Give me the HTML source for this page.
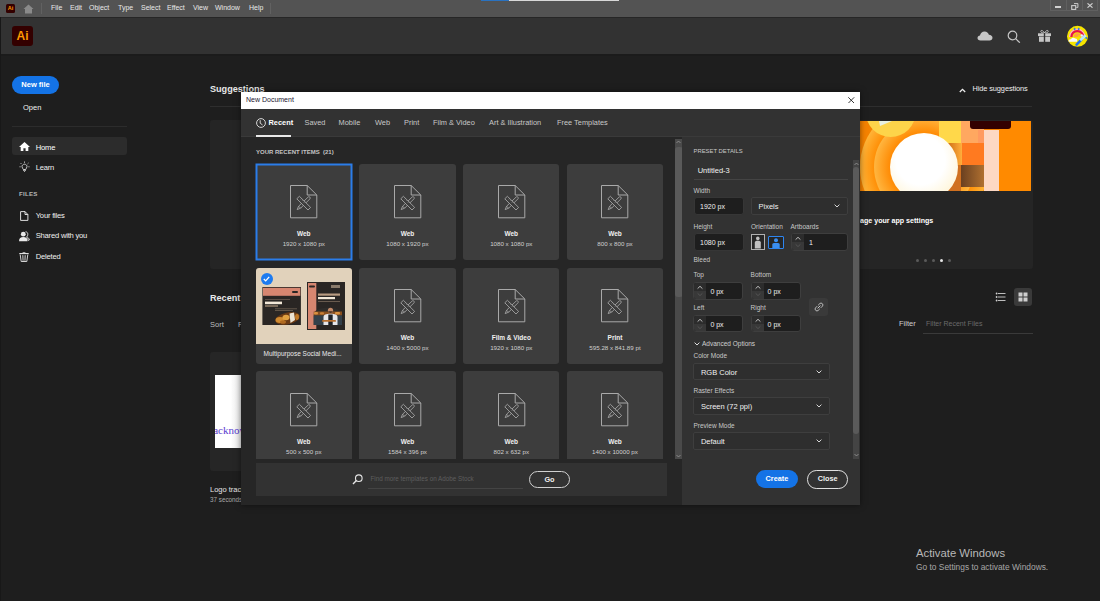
<!DOCTYPE html>
<html><head><meta charset="utf-8">
<style>
*{margin:0;padding:0;box-sizing:border-box}
html,body{width:1100px;height:601px;overflow:hidden;background:#1e1e1e;font-family:"Liberation Sans",sans-serif;color:#ddd}
.a{position:absolute;white-space:nowrap}
#menubar{position:absolute;left:0;top:0;width:1100px;height:17px;background:#535353}
#menubar .m{position:absolute;top:3.9px;font-size:7px;color:#e8e8e8}
#header{position:absolute;left:0;top:17px;width:1100px;height:37px;background:#323232}
#main{position:absolute;left:0;top:54px;width:1100px;height:547px;background:#1e1e1e}
.side{font-size:7.5px;color:#f0f0f0}
.tab{top:26.3px;font-size:7.4px;color:#c8c8c8}
.lbl{font-size:6.5px;color:#c8c8c8}
.inp{background:#1e1e1e;border-radius:3px;border:1px solid #363636}
.inp span,.step span,.dd span{position:absolute;top:50%;transform:translateY(-50%);font-size:7px;color:#f0f0f0}
.dd{border:1px solid #3e3e3e;border-radius:2px;background:#2e2e2e}
.dd span{left:6.5px;font-size:7.5px}
.dd .chev{position:absolute;right:7px;top:50%;margin-top:-2px}
.step{background:#1e1e1e;border-radius:3px;overflow:hidden;border:1px solid #3e3e3e}
.card{position:absolute;width:96.4px;height:96.7px;background:#3d3d3d;border-radius:3px}
.card .ic{position:absolute;left:34.6px;top:21.2px;width:28px;height:34px}
.card .ic svg{display:block}
.card .ct{position:absolute;left:0;width:100%;top:66.7px;text-align:center;font-size:6.5px;font-weight:bold;color:#f0f0f0}
.card .cs{position:absolute;left:0;width:100%;top:76.5px;text-align:center;font-size:6.2px;color:#d0d0d0}

</style></head><body>
<div id="menubar">
  <div class="a" style="left:6px;top:4px;width:9px;height:9px;background:#330000;border-radius:1.5px;color:#ff9a00;font-size:5.5px;font-weight:bold;line-height:9px;text-align:center">Ai</div>
  <svg class="a" style="left:23px;top:4px" width="11" height="10" viewBox="0 0 11 10"><path d="M5.5 0.5 L10.5 5 H9 V9.5 H2 V5 H0.5 Z" fill="#8a8a8a"/></svg>
  <div class="a" style="left:41px;top:3px;width:1px;height:11px;background:#616161"></div>
  <div class="m a" style="left:51px">File</div>
  <div class="m a" style="left:70px">Edit</div>
  <div class="m a" style="left:89px">Object</div>
  <div class="m a" style="left:118px">Type</div>
  <div class="m a" style="left:141px">Select</div>
  <div class="m a" style="left:167px">Effect</div>
  <div class="m a" style="left:193px">View</div>
  <div class="m a" style="left:215px">Window</div>
  <div class="m a" style="left:249px">Help</div>
  <div class="a" style="left:270px;top:3px;width:1px;height:11px;background:#616161"></div>
  <div class="a" style="left:481px;top:0;width:28px;height:1px;background:#2a72c0"></div>
  <div class="a" style="left:509px;top:0;width:110px;height:1px;background:#d8d8d8"></div>
  <!-- window controls -->
  <div class="a" style="left:1050px;top:0;width:48px;height:11px;border:1px solid #606060;border-top:none"></div>
  <div class="a" style="left:1066px;top:0;width:1px;height:10px;background:#606060"></div>
  <div class="a" style="left:1082px;top:0;width:1px;height:10px;background:#606060"></div>
  <div class="a" style="left:1055px;top:6px;width:6.2px;height:1.8px;background:#d0d0d0"></div>
  <svg class="a" style="left:1071px;top:3px" width="8" height="7" viewBox="0 0 8 7"><path d="M3 0.6 H6.9 V4.4 H5.3" fill="none" stroke="#cccccc" stroke-width="1"/><rect x="0.7" y="2.6" width="4" height="3.8" fill="none" stroke="#cccccc" stroke-width="1.1"/></svg>
  <svg class="a" style="left:1087.3px;top:3px" width="6" height="5" viewBox="0 0 6 5"><path d="M0.5 0.3L5.5 4.7M5.5 0.3L0.5 4.7" stroke="#d0d0d0" stroke-width="1.1"/></svg>
</div>
<div id="header">
  <div class="a" style="left:12px;top:9px;width:21px;height:20px;background:#330000;border-radius:3px;color:#ff9a00;font-size:12px;font-weight:bold;line-height:20px;text-align:center">Ai</div>
  <svg class="a" style="left:977px;top:13px" width="16" height="11" viewBox="0 0 16 11"><path d="M3.5 10.5 C1.5 10.5 0.5 9.3 0.5 8 C0.5 6.6 1.6 5.6 3 5.6 C3.3 3.4 5 1.5 7.6 1.5 C9.8 1.5 11.4 2.9 11.9 4.8 C14 4.8 15.5 6.2 15.5 7.7 C15.5 9.3 14.3 10.5 12.5 10.5 Z" fill="#c6c6c6"/></svg>
  <svg class="a" style="left:1006.5px;top:12.6px" width="14" height="13" viewBox="0 0 14 13"><circle cx="5.5" cy="5.5" r="4.3" fill="none" stroke="#c6c6c6" stroke-width="1.2"/><path d="M8.6 8.6 L12.8 12.6" stroke="#c6c6c6" stroke-width="1.3"/></svg>
  <svg class="a" style="left:1037px;top:12.3px" width="15" height="13" viewBox="0 0 15 13"><path d="M7.5 4 C6 1 3.5 0.8 3.8 2.6 C4 3.8 6 4 7.5 4 C9 4 11 3.8 11.2 2.6 C11.5 0.8 9 1 7.5 4" fill="none" stroke="#c6c6c6" stroke-width="0.9"/><rect x="1" y="4.3" width="13" height="2.8" fill="#c6c6c6"/><rect x="2" y="7.6" width="11" height="5.2" fill="#c6c6c6"/><rect x="6.8" y="4" width="1.4" height="9" fill="#323232"/></svg>
  <svg class="a" style="left:1066px;top:8px" width="23" height="23" viewBox="0 0 23 23"><circle cx="11.5" cy="11.3" r="10.5" fill="#f5e400"/><path d="M3.6 12 A7.6 7.6 0 0 1 18.8 12" fill="none" stroke="#ffa8d8" stroke-width="1.4"/><path d="M5.4 12 A5.9 5.9 0 0 1 17.2 12" fill="none" stroke="#e8104e" stroke-width="2.2"/><path d="M7.6 12 A3.8 3.8 0 0 1 15.2 12 Z" fill="#ffa040"/><path d="M11.4 12 L13 9.5 L15.2 12 Z" fill="#ffd000"/><path d="M2.6 16.8 C2.2 15 3.6 13.9 5 14.3 C5.6 12.6 8 12.3 9.2 13.6 C10.6 13.4 11.6 14.6 11.2 16.8 Z" fill="#fafafa"/><path d="M10.6 19.6 L15.4 14.6" stroke="#1f6ff0" stroke-width="2.6" stroke-linecap="round"/><path d="M14.2 15.2 L19.6 10.2" stroke="#b8e6ff" stroke-width="2.6"/><circle cx="15.8" cy="10.4" r="1.2" fill="#e8f6ff"/><circle cx="20.3" cy="13" r="0.9" fill="#2a7af0"/><ellipse cx="8.6" cy="3.9" rx="0.9" ry="1.2" fill="#3a7be0"/><ellipse cx="12.7" cy="3.9" rx="0.9" ry="1.2" fill="#3a7be0"/></svg>
</div>
<div id="main"></div>
<div class="a" style="left:0;top:17px;width:1100px;height:1px;background:#262626"></div>
<div class="a" style="left:0;top:54px;width:1100px;height:1.5px;background:#1b1b1b"></div>
<div class="a" style="left:0;top:17px;width:1px;height:584px;background:#181818"></div>

<!-- sidebar -->
<div class="a" style="left:12px;top:76px;width:47px;height:18px;border-radius:9px;background:#1473e6;color:#fff;font-size:7.5px;font-weight:bold;line-height:18px;text-align:center">New file</div>
<div class="a side" style="left:23px;top:103px">Open</div>
<div class="a" style="left:12px;top:126px;width:115px;height:1px;background:#2c2c2c"></div>
<div class="a" style="left:12px;top:137px;width:115px;height:18px;border-radius:3px;background:#2c2c2c"></div>
<svg class="a" style="left:19px;top:142px" width="11" height="9" viewBox="0 0 11 9"><path d="M5.5 0 L11 5 H9.3 V9 H6.6 V6.3 H4.4 V9 H1.7 V5 H0 Z" fill="#fff"/></svg>
<div class="a side" style="left:35.7px;top:143px;font-size:7.6px;letter-spacing:-0.15px;color:#fff">Home</div>
<svg class="a" style="left:19px;top:161px" width="11" height="11" viewBox="0 0 11 11"><path d="M5.5 3.2 C3.8 3.2 3 4.5 3 5.6 C3 6.8 4 7.4 4.3 8.5 H6.7 C7 7.4 8 6.8 8 5.6 C8 4.5 7.2 3.2 5.5 3.2 Z M4.4 9 H6.6 L5.5 10.6 Z" fill="none" stroke="#e6e6e6" stroke-width="0.8"/><path d="M5.5 0.5V1.8M1.5 2L2.4 2.9M9.5 2L8.6 2.9M0.5 5.8H1.6M9.4 5.8H10.5" stroke="#e6e6e6" stroke-width="0.8"/></svg>
<div class="a side" style="left:35.7px;top:163px;font-size:7.6px;letter-spacing:-0.2px">Learn</div>
<div class="a" style="left:19px;top:190px;font-size:6.2px;font-weight:bold;color:#b4b4b4;letter-spacing:0.2px">FILES</div>
<svg class="a" style="left:20.3px;top:210.6px" width="8.5" height="10" viewBox="0 0 8.5 10"><path d="M0.6 0.6 H5 L7.9 3.5 V9.4 H0.6 Z M5 0.6 V3.5 H7.9" fill="none" stroke="#e8e8e8" stroke-width="0.95"/></svg>
<div class="a side" style="left:35.7px;top:210.5px;font-size:7.6px;letter-spacing:-0.2px">Your files</div>
<svg class="a" style="left:19px;top:231px" width="11" height="10.5" viewBox="0 0 11 10.5"><path d="M6.5 0.8 C8.2 0.8 8.8 2 8.8 3.3 C8.8 4.6 8.2 5.6 7.6 6 C9 6.3 9.6 7 10.5 8.8 L9.5 9.5 C9 8.2 8.6 7.4 7.6 7.1" fill="none" stroke="#e8e8e8" stroke-width="0.9"/><circle cx="4.3" cy="3.2" r="2.4" fill="#e8e8e8"/><path d="M0 10.2 C0 7.2 1.6 6 4.3 6 C7 6 8.6 7.2 8.6 10.2 Z" fill="#e8e8e8"/></svg>
<div class="a side" style="left:35.7px;top:231.3px;font-size:7.6px;letter-spacing:-0.2px">Shared with you</div>
<svg class="a" style="left:19.3px;top:252px" width="10" height="10" viewBox="0 0 10 10"><path d="M0.3 1.6 H9.7" stroke="#e8e8e8" stroke-width="1.1"/><path d="M3.3 1.2 C3.5 0.4 6.5 0.4 6.7 1.2" fill="none" stroke="#e8e8e8" stroke-width="0.8"/><path d="M1.2 2.6 L2.2 9.5 H7.8 L8.8 2.6" fill="none" stroke="#e8e8e8" stroke-width="0.9"/><path d="M3.5 3.2 L3.9 8.8 M5 3.2 V8.8 M6.5 3.2 L6.1 8.8" stroke="#d0d0d0" stroke-width="0.7"/></svg>
<div class="a side" style="left:35.7px;top:251.5px;font-size:7.6px;letter-spacing:-0.2px">Deleted</div>

<!-- background home content -->
<div class="a" style="left:210px;top:83.5px;font-size:9.1px;font-weight:bold;color:#e8e8e8">Suggestions</div>
<div class="a" style="left:210px;top:106px;width:822px;height:1px;background:#2e2e2e"></div>
<svg class="a" style="left:959px;top:87.5px" width="7" height="5" viewBox="0 0 7 5"><path d="M0.8 4 L3.5 1.3 L6.2 4" fill="none" stroke="#eeeeee" stroke-width="1.3"/></svg>
<div class="a" style="left:972.5px;top:84.3px;font-size:7.4px;letter-spacing:-0.1px;color:#f0f0f0">Hide suggestions</div>
<div class="a" style="left:210px;top:120.3px;width:822.5px;height:149px;background:#252525;border-radius:3px"></div>
<svg class="a" style="left:860px;top:121px" width="171" height="70" viewBox="0 0 171 70">
<defs>
<radialGradient id="rg1" cx="64" cy="46" r="64" gradientUnits="userSpaceOnUse"><stop offset="0.75" stop-color="#ff8a00"/><stop offset="1" stop-color="#ffb438"/></radialGradient>
<radialGradient id="rg2" cx="64" cy="46" r="50" gradientUnits="userSpaceOnUse"><stop offset="0.66" stop-color="#ff8800"/><stop offset="1" stop-color="#ffb640"/></radialGradient>
<linearGradient id="lg1" x1="0" y1="0" x2="1" y2="0"><stop offset="0" stop-color="#c06010"/><stop offset="1" stop-color="#ffb040"/></linearGradient>
<linearGradient id="lg2" x1="0" y1="0" x2="1" y2="0"><stop offset="0" stop-color="#6a4020"/><stop offset="1" stop-color="#b07030"/></linearGradient>
<radialGradient id="rgw" cx="0.45" cy="0.4" r="0.6"><stop offset="0.6" stop-color="#ffffff"/><stop offset="1" stop-color="#fff6dc"/></radialGradient>
</defs>
<rect width="171" height="70" fill="#f58200"/>
<circle cx="64" cy="46" r="64" fill="url(#rg1)"/>
<circle cx="64" cy="46" r="50" fill="url(#rg2)"/>
<circle cx="30.7" cy="-9" r="25" fill="#fdd44a"/>
<path d="M19 0 L32 0 L20 5 Z" fill="#e8f0e0"/>
<rect x="79" y="0" width="22" height="22" fill="#ffd84a"/>
<rect x="101" y="0" width="23" height="22" fill="#ffa860"/>
<rect x="85" y="22" width="17" height="22" fill="url(#lg1)" opacity="0.9"/>
<rect x="102" y="22" width="22" height="22" fill="#ff7a20"/>
<rect x="101" y="44" width="23" height="22" fill="url(#lg2)"/>
<rect x="85" y="44" width="16" height="26" fill="#d07020"/>
<circle cx="64" cy="46" r="34" fill="url(#rgw)"/>
<rect x="124" y="9" width="15" height="61" fill="#fdd8c4"/>
<rect x="118" y="9" width="6" height="13" fill="#ff9a60"/>
<rect x="139" y="0" width="32" height="70" fill="#ff8a00"/>
<rect x="110" y="-4" width="41" height="12" rx="3" fill="#330000"/>
</svg>
<div class="a" style="left:860px;top:216.8px;font-size:7.1px;font-weight:bold;color:#fff">age your app settings</div>
<div class="a" style="left:916px;top:259px;width:3px;height:3px;border-radius:2px;background:#5a5a5a"></div>
<div class="a" style="left:924px;top:259px;width:3px;height:3px;border-radius:2px;background:#5a5a5a"></div>
<div class="a" style="left:932px;top:259px;width:3px;height:3px;border-radius:2px;background:#5a5a5a"></div>
<div class="a" style="left:940px;top:259px;width:3px;height:3px;border-radius:2px;background:#e6e6e6"></div>
<div class="a" style="left:948px;top:259px;width:3px;height:3px;border-radius:2px;background:#5a5a5a"></div>

<div class="a" style="left:210px;top:292.5px;font-size:9.1px;font-weight:bold;color:#e8e8e8">Recent</div>
<div class="a" style="left:210px;top:320px;font-size:7.5px;color:#bdbdbd">Sort</div>
<div class="a" style="left:238px;top:320px;font-size:7.5px;color:#bdbdbd">F</div>
<svg class="a" style="left:994.5px;top:292px" width="11" height="10" viewBox="0 0 11 10"><circle cx="1.6" cy="1.5" r="0.9" fill="#d0d0d0"/><circle cx="1.6" cy="5" r="0.9" fill="#d0d0d0"/><circle cx="1.6" cy="8.5" r="0.9" fill="#d0d0d0"/><path d="M3 1.5H10.5M3 5H10.5M3 8.5H10.5" stroke="#d0d0d0" stroke-width="0.9"/></svg>
<div class="a" style="left:1014px;top:288px;width:18px;height:18px;border-radius:3px;background:#3a3a3a"></div>
<svg class="a" style="left:1018px;top:292px" width="10" height="10" viewBox="0 0 10 10"><rect x="0.5" y="0.5" width="4" height="4" fill="#cdcdcd"/><rect x="5.5" y="0.5" width="4" height="4" fill="#cdcdcd"/><rect x="0.5" y="5.5" width="4" height="4" fill="#cdcdcd"/><rect x="5.5" y="5.5" width="4" height="4" fill="#cdcdcd"/></svg>
<div class="a" style="left:899px;top:319px;font-size:7.5px;color:#cfcfcf">Filter</div>
<div class="a" style="left:926px;top:320px;font-size:7px;color:#6a6a6a">Filter Recent Files</div>
<div class="a" style="left:923px;top:333px;width:109.5px;height:1px;background:#3a3a3a"></div>
<div class="a" style="left:210px;top:352px;width:60px;height:119px;background:#262626;border-radius:3px"></div>
<div class="a" style="left:214.7px;top:374.5px;width:26px;height:73px;background:linear-gradient(90deg,#fff 0,#fff 60%,#e8e8e8 100%);overflow:hidden"><div class="a" style="left:-1.5px;top:49px;font-family:'Liberation Serif',serif;font-size:11px;color:#5a3cd0">acknow</div></div>
<div class="a" style="left:210px;top:485px;font-size:7.5px;color:#e6e6e6">Logo tracing</div>
<div class="a" style="left:210px;top:496px;font-size:6.3px;color:#a8a8a8">37 seconds ago</div>

<div class="a" style="left:916px;top:546.8px;font-size:11.3px;color:#b8b8b8">Activate Windows</div>
<div class="a" style="left:916px;top:561.8px;font-size:8.4px;color:#a8a8a8">Go to Settings to activate Windows.</div>


<div id="dlg" style="position:absolute;left:241px;top:91.8px;width:618.6px;height:413.1px;background:#262626;box-shadow:0 0 6px rgba(0,0,0,0.5);overflow:hidden">
 <div class="a" style="left:0;top:0;width:618.6px;height:17.3px;background:#fff"></div>
 <div class="a" style="left:5px;top:4.5px;font-size:7px;color:#1c1530">New Document</div>
 <svg class="a" style="left:607px;top:5.2px" width="6.5" height="6.5" viewBox="0 0 6.5 6.5"><path d="M0.3 0.3L6.2 6.2M6.2 0.3L0.3 6.2" stroke="#222" stroke-width="0.9"/></svg>
 <div class="a" style="left:0;top:17.2px;width:618.6px;height:28px;background:#323232;border-bottom:1px solid #3a3a3a"></div>
 <svg class="a" style="left:15px;top:26px" width="10" height="10" viewBox="0 0 10 10"><circle cx="5" cy="5" r="4.4" fill="none" stroke="#e8e8e8" stroke-width="0.9"/><path d="M4.2 2.2 V5.2 L6.6 7" fill="none" stroke="#e8e8e8" stroke-width="0.9"/></svg>
 <div class="a tab" style="left:27.5px;color:#fff;font-weight:bold">Recent</div>
 <div class="a" style="left:15px;top:43px;width:35px;height:2px;background:#e8e8e8"></div>
 <div class="a tab" style="left:63.5px">Saved</div>
 <div class="a tab" style="left:97.5px">Mobile</div>
 <div class="a tab" style="left:134px">Web</div>
 <div class="a tab" style="left:163px">Print</div>
 <div class="a tab" style="left:192px">Film &amp; Video</div>
 <div class="a tab" style="left:248px">Art &amp; Illustration</div>
 <div class="a tab" style="left:316px">Free Templates</div>
 <div class="a" style="left:15px;top:57px;font-size:6px;font-weight:bold;color:#c4c4c4">YOUR RECENT ITEMS&nbsp;&nbsp;(21)</div>
 <div class="a" style="left:0;top:45px;width:434px;height:322px;overflow:hidden">
<div class="card" style="left:14.6px;top:27px;border-radius:0;box-shadow:0 0 0 0.5px #2b7de9, inset 0 0 0 1.5px #2b7de9;"><div class="ic"><svg width="28" height="34" viewBox="0 0 28 34"><path d="M0.5 0.5 H17.2 L26.8 10 V32.8 H0.5 Z M17.2 0.5 V10 H26.8" fill="none" stroke="#a9a9a9" stroke-width="1"/><path d="M18.1 12.1 C18.6 11.6 19.4 11.6 19.9 12.1 C20.4 12.6 20.4 13.4 19.9 13.9 L10.6 23.2 L7.2 24.6 L8.6 21.2 Z M8.6 21.2 L10.6 23.2" fill="none" stroke="#a9a9a9" stroke-width="0.85"/><path d="M9.4 11.3 L20.6 22.4 L18 25 L6.8 13.8 Z" fill="#3d3d3d" stroke="#a9a9a9" stroke-width="0.85" stroke-linejoin="round"/><path d="M11.6 13.5 L10.7 14.4 M13.2 15.1 L12.6 15.7 M14.8 16.7 L13.9 17.6" stroke="#a9a9a9" stroke-width="0.7"/></svg></div><div class="ct">Web</div><div class="cs">1920 x 1080 px</div></div>
<div class="card" style="left:118.3px;top:27px;"><div class="ic"><svg width="28" height="34" viewBox="0 0 28 34"><path d="M0.5 0.5 H17.2 L26.8 10 V32.8 H0.5 Z M17.2 0.5 V10 H26.8" fill="none" stroke="#a9a9a9" stroke-width="1"/><path d="M18.1 12.1 C18.6 11.6 19.4 11.6 19.9 12.1 C20.4 12.6 20.4 13.4 19.9 13.9 L10.6 23.2 L7.2 24.6 L8.6 21.2 Z M8.6 21.2 L10.6 23.2" fill="none" stroke="#a9a9a9" stroke-width="0.85"/><path d="M9.4 11.3 L20.6 22.4 L18 25 L6.8 13.8 Z" fill="#3d3d3d" stroke="#a9a9a9" stroke-width="0.85" stroke-linejoin="round"/><path d="M11.6 13.5 L10.7 14.4 M13.2 15.1 L12.6 15.7 M14.8 16.7 L13.9 17.6" stroke="#a9a9a9" stroke-width="0.7"/></svg></div><div class="ct">Web</div><div class="cs">1080 x 1920 px</div></div>
<div class="card" style="left:222.1px;top:27px;"><div class="ic"><svg width="28" height="34" viewBox="0 0 28 34"><path d="M0.5 0.5 H17.2 L26.8 10 V32.8 H0.5 Z M17.2 0.5 V10 H26.8" fill="none" stroke="#a9a9a9" stroke-width="1"/><path d="M18.1 12.1 C18.6 11.6 19.4 11.6 19.9 12.1 C20.4 12.6 20.4 13.4 19.9 13.9 L10.6 23.2 L7.2 24.6 L8.6 21.2 Z M8.6 21.2 L10.6 23.2" fill="none" stroke="#a9a9a9" stroke-width="0.85"/><path d="M9.4 11.3 L20.6 22.4 L18 25 L6.8 13.8 Z" fill="#3d3d3d" stroke="#a9a9a9" stroke-width="0.85" stroke-linejoin="round"/><path d="M11.6 13.5 L10.7 14.4 M13.2 15.1 L12.6 15.7 M14.8 16.7 L13.9 17.6" stroke="#a9a9a9" stroke-width="0.7"/></svg></div><div class="ct">Web</div><div class="cs">1080 x 1080 px</div></div>
<div class="card" style="left:325.8px;top:27px;"><div class="ic"><svg width="28" height="34" viewBox="0 0 28 34"><path d="M0.5 0.5 H17.2 L26.8 10 V32.8 H0.5 Z M17.2 0.5 V10 H26.8" fill="none" stroke="#a9a9a9" stroke-width="1"/><path d="M18.1 12.1 C18.6 11.6 19.4 11.6 19.9 12.1 C20.4 12.6 20.4 13.4 19.9 13.9 L10.6 23.2 L7.2 24.6 L8.6 21.2 Z M8.6 21.2 L10.6 23.2" fill="none" stroke="#a9a9a9" stroke-width="0.85"/><path d="M9.4 11.3 L20.6 22.4 L18 25 L6.8 13.8 Z" fill="#3d3d3d" stroke="#a9a9a9" stroke-width="0.85" stroke-linejoin="round"/><path d="M11.6 13.5 L10.7 14.4 M13.2 15.1 L12.6 15.7 M14.8 16.7 L13.9 17.6" stroke="#a9a9a9" stroke-width="0.7"/></svg></div><div class="ct">Web</div><div class="cs">800 x 800 px</div></div>
<div class="card" style="left:118.3px;top:130.9px;"><div class="ic"><svg width="28" height="34" viewBox="0 0 28 34"><path d="M0.5 0.5 H17.2 L26.8 10 V32.8 H0.5 Z M17.2 0.5 V10 H26.8" fill="none" stroke="#a9a9a9" stroke-width="1"/><path d="M18.1 12.1 C18.6 11.6 19.4 11.6 19.9 12.1 C20.4 12.6 20.4 13.4 19.9 13.9 L10.6 23.2 L7.2 24.6 L8.6 21.2 Z M8.6 21.2 L10.6 23.2" fill="none" stroke="#a9a9a9" stroke-width="0.85"/><path d="M9.4 11.3 L20.6 22.4 L18 25 L6.8 13.8 Z" fill="#3d3d3d" stroke="#a9a9a9" stroke-width="0.85" stroke-linejoin="round"/><path d="M11.6 13.5 L10.7 14.4 M13.2 15.1 L12.6 15.7 M14.8 16.7 L13.9 17.6" stroke="#a9a9a9" stroke-width="0.7"/></svg></div><div class="ct">Web</div><div class="cs">1400 x 5000 px</div></div>
<div class="card" style="left:222.1px;top:130.9px;"><div class="ic"><svg width="28" height="34" viewBox="0 0 28 34"><path d="M0.5 0.5 H17.2 L26.8 10 V32.8 H0.5 Z M17.2 0.5 V10 H26.8" fill="none" stroke="#a9a9a9" stroke-width="1"/><path d="M18.1 12.1 C18.6 11.6 19.4 11.6 19.9 12.1 C20.4 12.6 20.4 13.4 19.9 13.9 L10.6 23.2 L7.2 24.6 L8.6 21.2 Z M8.6 21.2 L10.6 23.2" fill="none" stroke="#a9a9a9" stroke-width="0.85"/><path d="M9.4 11.3 L20.6 22.4 L18 25 L6.8 13.8 Z" fill="#3d3d3d" stroke="#a9a9a9" stroke-width="0.85" stroke-linejoin="round"/><path d="M11.6 13.5 L10.7 14.4 M13.2 15.1 L12.6 15.7 M14.8 16.7 L13.9 17.6" stroke="#a9a9a9" stroke-width="0.7"/></svg></div><div class="ct">Film &amp; Video</div><div class="cs">1920 x 1080 px</div></div>
<div class="card" style="left:325.8px;top:130.9px;"><div class="ic"><svg width="28" height="34" viewBox="0 0 28 34"><path d="M0.5 0.5 H17.2 L26.8 10 V32.8 H0.5 Z M17.2 0.5 V10 H26.8" fill="none" stroke="#a9a9a9" stroke-width="1"/><path d="M18.1 12.1 C18.6 11.6 19.4 11.6 19.9 12.1 C20.4 12.6 20.4 13.4 19.9 13.9 L10.6 23.2 L7.2 24.6 L8.6 21.2 Z M8.6 21.2 L10.6 23.2" fill="none" stroke="#a9a9a9" stroke-width="0.85"/><path d="M9.4 11.3 L20.6 22.4 L18 25 L6.8 13.8 Z" fill="#3d3d3d" stroke="#a9a9a9" stroke-width="0.85" stroke-linejoin="round"/><path d="M11.6 13.5 L10.7 14.4 M13.2 15.1 L12.6 15.7 M14.8 16.7 L13.9 17.6" stroke="#a9a9a9" stroke-width="0.7"/></svg></div><div class="ct">Print</div><div class="cs">595.28 x 841.89 pt</div></div>
<div class="card" style="left:14.6px;top:234.7px;"><div class="ic"><svg width="28" height="34" viewBox="0 0 28 34"><path d="M0.5 0.5 H17.2 L26.8 10 V32.8 H0.5 Z M17.2 0.5 V10 H26.8" fill="none" stroke="#a9a9a9" stroke-width="1"/><path d="M18.1 12.1 C18.6 11.6 19.4 11.6 19.9 12.1 C20.4 12.6 20.4 13.4 19.9 13.9 L10.6 23.2 L7.2 24.6 L8.6 21.2 Z M8.6 21.2 L10.6 23.2" fill="none" stroke="#a9a9a9" stroke-width="0.85"/><path d="M9.4 11.3 L20.6 22.4 L18 25 L6.8 13.8 Z" fill="#3d3d3d" stroke="#a9a9a9" stroke-width="0.85" stroke-linejoin="round"/><path d="M11.6 13.5 L10.7 14.4 M13.2 15.1 L12.6 15.7 M14.8 16.7 L13.9 17.6" stroke="#a9a9a9" stroke-width="0.7"/></svg></div><div class="ct">Web</div><div class="cs">500 x 500 px</div></div>
<div class="card" style="left:118.3px;top:234.7px;"><div class="ic"><svg width="28" height="34" viewBox="0 0 28 34"><path d="M0.5 0.5 H17.2 L26.8 10 V32.8 H0.5 Z M17.2 0.5 V10 H26.8" fill="none" stroke="#a9a9a9" stroke-width="1"/><path d="M18.1 12.1 C18.6 11.6 19.4 11.6 19.9 12.1 C20.4 12.6 20.4 13.4 19.9 13.9 L10.6 23.2 L7.2 24.6 L8.6 21.2 Z M8.6 21.2 L10.6 23.2" fill="none" stroke="#a9a9a9" stroke-width="0.85"/><path d="M9.4 11.3 L20.6 22.4 L18 25 L6.8 13.8 Z" fill="#3d3d3d" stroke="#a9a9a9" stroke-width="0.85" stroke-linejoin="round"/><path d="M11.6 13.5 L10.7 14.4 M13.2 15.1 L12.6 15.7 M14.8 16.7 L13.9 17.6" stroke="#a9a9a9" stroke-width="0.7"/></svg></div><div class="ct">Web</div><div class="cs">1584 x 396 px</div></div>
<div class="card" style="left:222.1px;top:234.7px;"><div class="ic"><svg width="28" height="34" viewBox="0 0 28 34"><path d="M0.5 0.5 H17.2 L26.8 10 V32.8 H0.5 Z M17.2 0.5 V10 H26.8" fill="none" stroke="#a9a9a9" stroke-width="1"/><path d="M18.1 12.1 C18.6 11.6 19.4 11.6 19.9 12.1 C20.4 12.6 20.4 13.4 19.9 13.9 L10.6 23.2 L7.2 24.6 L8.6 21.2 Z M8.6 21.2 L10.6 23.2" fill="none" stroke="#a9a9a9" stroke-width="0.85"/><path d="M9.4 11.3 L20.6 22.4 L18 25 L6.8 13.8 Z" fill="#3d3d3d" stroke="#a9a9a9" stroke-width="0.85" stroke-linejoin="round"/><path d="M11.6 13.5 L10.7 14.4 M13.2 15.1 L12.6 15.7 M14.8 16.7 L13.9 17.6" stroke="#a9a9a9" stroke-width="0.7"/></svg></div><div class="ct">Web</div><div class="cs">802 x 632 px</div></div>
<div class="card" style="left:325.8px;top:234.7px;"><div class="ic"><svg width="28" height="34" viewBox="0 0 28 34"><path d="M0.5 0.5 H17.2 L26.8 10 V32.8 H0.5 Z M17.2 0.5 V10 H26.8" fill="none" stroke="#a9a9a9" stroke-width="1"/><path d="M18.1 12.1 C18.6 11.6 19.4 11.6 19.9 12.1 C20.4 12.6 20.4 13.4 19.9 13.9 L10.6 23.2 L7.2 24.6 L8.6 21.2 Z M8.6 21.2 L10.6 23.2" fill="none" stroke="#a9a9a9" stroke-width="0.85"/><path d="M9.4 11.3 L20.6 22.4 L18 25 L6.8 13.8 Z" fill="#3d3d3d" stroke="#a9a9a9" stroke-width="0.85" stroke-linejoin="round"/><path d="M11.6 13.5 L10.7 14.4 M13.2 15.1 L12.6 15.7 M14.8 16.7 L13.9 17.6" stroke="#a9a9a9" stroke-width="0.7"/></svg></div><div class="ct">Web</div><div class="cs">1400 x 10000 px</div></div>

 <div class="card" style="left:14.6px;top:130.9px;background:#3c3c3c">
   <div class="a" style="left:0;top:0;width:96px;height:76px;background:#e1d2bb;border-radius:3px 3px 0 0"></div>
   <svg class="a" style="left:0;top:0" width="96" height="76" viewBox="0 0 96 76">
<defs><linearGradient id="brd" x1="0" y1="0" x2="1" y2="0"><stop offset="0" stop-color="#a05a18"/><stop offset="0.5" stop-color="#e0a050"/><stop offset="0.7" stop-color="#f0e0c0"/><stop offset="1" stop-color="#8a4a18"/></linearGradient></defs>
<rect x="6.4" y="19" width="38.5" height="38" fill="#2a2624"/>
<rect x="7" y="19.8" width="37.3" height="8" fill="#d78670"/>
<rect x="36" y="23" width="6" height="2" rx="1" fill="#2a2624"/>
<rect x="9" y="31" width="25" height="0.8" fill="#6a5a50"/>
<rect x="9" y="33.6" width="17" height="2.6" fill="#f3e8d8"/>
<rect x="9" y="37" width="13" height="2" fill="#7a6a5a"/>
<rect x="19" y="40.5" width="22" height="0.7" fill="#7a6a5a"/>
<rect x="19" y="42" width="18" height="0.7" fill="#7a6a5a"/>
<ellipse cx="31.5" cy="50.5" rx="12.5" ry="6" transform="rotate(-12 31.5 50.5)" fill="#6a3a14"/><ellipse cx="24" cy="52" rx="4.5" ry="3" fill="#d08a30"/><ellipse cx="30" cy="49.5" rx="3.5" ry="2.8" fill="#e0a040"/><ellipse cx="27" cy="54" rx="3" ry="1.8" fill="#b06a20"/><path d="M33.5 45.5 L38 44.5 L39 52 L34.5 55 Z" fill="#ece4d4"/><ellipse cx="41" cy="49" rx="2" ry="3" fill="#c07a28"/>
<rect x="51" y="14" width="38" height="48" fill="#2a2624"/>
<rect x="52" y="15" width="8.3" height="46" fill="#d78670"/>
<rect x="53" y="17.5" width="6" height="2" rx="1" fill="#2a2624"/>
<rect x="75" y="17" width="9" height="3" fill="#8a7a6a"/>
<rect x="62" y="25.5" width="22" height="2.2" fill="#b89a80"/>
<rect x="62" y="29" width="17" height="2.2" fill="#f3e8d8"/>
<rect x="62" y="33" width="22" height="0.8" fill="#7a6a5a"/>
<path d="M57.7 57 V48 C57.7 42 63 39.7 72 39.7 C81 39.7 86 42 86 48 V57 Z" fill="#2e2c2a"/>
<rect x="57.7" y="43.5" width="28.3" height="4" fill="#8a5020"/>
<rect x="58" y="44" width="4" height="2.5" rx="1" fill="#d89040"/><rect x="64" y="44.2" width="4" height="2.3" rx="1" fill="#c88038"/><rect x="79" y="44" width="5" height="2.5" rx="1" fill="#d89040"/>
<rect x="57.7" y="47.5" width="28.3" height="9.5" fill="#34404a"/>
<path d="M67.5 57 V49 C67.5 46.8 70 45.8 74.5 45.8 C79 45.8 81.5 46.8 81.5 49 V57 Z" fill="#e6e6ea"/>
<path d="M72.3 46.5 H76.7 V57 H72.3 Z" fill="#1e2228"/>
<circle cx="74.5" cy="42.3" r="2.6" fill="#c08868"/>
<path d="M72.2 43.2 C72.5 45.5 76.5 45.5 76.8 43.2 Z" fill="#4a3020"/>
<rect x="66" y="52" width="14" height="1.8" rx="0.9" fill="#b87030"/>
</svg>
   <div class="a" style="left:5px;top:71px;width:12px;height:12px;border-radius:6px;background:#1d7bf0;top:5px"></div>
   <svg class="a" style="left:7.5px;top:8px" width="7" height="6" viewBox="0 0 7 6"><path d="M0.8 3 L2.7 4.9 L6.2 0.9" fill="none" stroke="#fff" stroke-width="1.3"/></svg>
   <div class="a" style="left:8px;top:82.5px;font-size:6.5px;color:#eaeaea">Multipurpose Social Medi...</div>
 </div>
 </div>
 <!-- left scrollbar -->
 <div class="a" style="left:434px;top:47px;width:7.5px;height:320px;background:#4a4a4a"></div>
 <div class="a" style="left:434px;top:55px;width:7.5px;height:150px;background:#5a5a5a;border-radius:3px"></div>
 <svg class="a" style="left:435px;top:48px" width="5" height="4" viewBox="0 0 5 4"><path d="M0.5 3 L2.5 1 L4.5 3" fill="none" stroke="#9a9a9a" stroke-width="0.8"/></svg>
 <svg class="a" style="left:435px;top:362px" width="5" height="4" viewBox="0 0 5 4"><path d="M0.5 1 L2.5 3 L4.5 1" fill="none" stroke="#9a9a9a" stroke-width="0.8"/></svg>
 <!-- search bar -->
 <div class="a" style="left:15px;top:371px;width:411px;height:33px;background:#323232"></div>
 <svg class="a" style="left:111px;top:382px" width="11" height="11" viewBox="0 0 11 11"><circle cx="6.8" cy="4.2" r="3.3" fill="none" stroke="#e6e6e6" stroke-width="1.1"/><path d="M4.4 6.6 L1 10" stroke="#e6e6e6" stroke-width="1.4"/></svg>
 <div class="a" style="left:129.5px;top:383.2px;font-size:6.3px;color:#5e5e5e">Find more templates on Adobe Stock</div>
 <div class="a" style="left:127px;top:396px;width:155px;height:1px;background:#444"></div>
 <div class="a" style="left:288px;top:379px;width:41px;height:17.5px;border:1.3px solid #d0d0d0;border-radius:9px;font-size:7.3px;font-weight:bold;color:#eee;text-align:center;line-height:15px">Go</div>
 <!-- right panel -->
 <div class="a" style="left:441px;top:45px;width:177.6px;height:368.1px;background:#323232"></div>
 
 <div class="a lbl" style="left:452.5px;top:56.5px;font-size:5.9px;color:#c8c8c8">PRESET DETAILS</div>
 <div class="a" style="left:456.7px;top:74px;font-size:7.5px;color:#f0f0f0">Untitled-3</div>
 <div class="a" style="left:453px;top:87px;width:154px;height:1px;background:#444"></div>
 <div class="a lbl" style="left:452.5px;top:95px">Width</div>
 <div class="a inp" style="left:453px;top:105.7px;width:50px;height:17.5px"><span style="left:5px">1920 px</span></div>
 <div class="a dd" style="left:510px;top:105.7px;width:97px;height:17.7px"><span>Pixels</span><svg class="chev" width="6" height="4" viewBox="0 0 6 4"><path d="M0.6 0.6 L3 3 L5.4 0.6" fill="none" stroke="#d8d8d8" stroke-width="1"/></svg></div>
 <div class="a lbl" style="left:452.5px;top:131px">Height</div>
 <div class="a lbl" style="left:510px;top:131px">Orientation</div>
 <div class="a lbl" style="left:549.5px;top:131px">Artboards</div>
 <div class="a inp" style="left:453px;top:141.4px;width:50px;height:17.5px"><span style="left:5px">1080 px</span></div>
 <div class="a" style="left:510px;top:142.5px;width:13.5px;height:15.3px;border:1px solid #b0b0b0;background:#262626;overflow:hidden"><svg class="a" style="left:0;top:0" width="12" height="14" viewBox="0 0 12 14"><circle cx="5.8" cy="3.4" r="1.8" fill="#c0c0c0"/><path d="M2.8 13.5 V7.6 C2.8 6.2 3.8 5.7 5.8 5.7 C7.8 5.7 8.8 6.2 8.8 7.6 V13.5 Z" fill="#c0c0c0"/></svg></div>
 <div class="a" style="left:527px;top:144px;width:16px;height:13.2px;border:1px solid #2d85f0;border-radius:1px;background:#262626;overflow:hidden"><svg class="a" style="left:0;top:0" width="14" height="12" viewBox="0 0 14 12"><circle cx="7" cy="3.3" r="2" fill="#3a8ef0"/><path d="M3.3 11.5 V7.4 C3.3 6.4 4.3 6 7 6 C9.7 6 10.7 6.4 10.7 7.4 V11.5 Z" fill="#3a8ef0"/></svg></div>
 <div class="a step" style="left:550px;top:141.4px;width:57px;height:17.5px"><svg class="a" style="left:0;top:0" width="12" height="16" viewBox="0 0 12 16" preserveAspectRatio="none"><rect width="12" height="7.7" fill="#2c2c2c"/><rect y="7.7" width="12" height="8.3" fill="#383838"/><path d="M3.6 5.6 L6 3.3 L8.4 5.6" fill="none" stroke="#d8d8d8" stroke-width="0.85"/><path d="M3.6 10.3 L6 12.6 L8.4 10.3" fill="none" stroke="#5a5a5a" stroke-width="0.85"/></svg><span style="left:17px">1</span></div>
 <div class="a lbl" style="left:452.5px;top:164.6px">Bleed</div>
 <div class="a lbl" style="left:452.5px;top:179.3px">Top</div>
 <div class="a lbl" style="left:509.6px;top:179.3px">Bottom</div>
 <div class="a step" style="left:452.4px;top:190.5px;width:50px;height:17.5px"><svg class="a" style="left:0;top:0" width="12" height="16" viewBox="0 0 12 16" preserveAspectRatio="none"><rect width="12" height="7.7" fill="#2c2c2c"/><rect y="7.7" width="12" height="8.3" fill="#383838"/><path d="M3.6 5.6 L6 3.3 L8.4 5.6" fill="none" stroke="#d8d8d8" stroke-width="0.85"/><path d="M3.6 10.3 L6 12.6 L8.4 10.3" fill="none" stroke="#5a5a5a" stroke-width="0.85"/></svg><span style="left:16px">0 px</span></div>
 <div class="a step" style="left:509.6px;top:190.5px;width:50px;height:17.5px"><svg class="a" style="left:0;top:0" width="12" height="16" viewBox="0 0 12 16" preserveAspectRatio="none"><rect width="12" height="7.7" fill="#2c2c2c"/><rect y="7.7" width="12" height="8.3" fill="#383838"/><path d="M3.6 5.6 L6 3.3 L8.4 5.6" fill="none" stroke="#d8d8d8" stroke-width="0.85"/><path d="M3.6 10.3 L6 12.6 L8.4 10.3" fill="none" stroke="#5a5a5a" stroke-width="0.85"/></svg><span style="left:16px">0 px</span></div>
 <div class="a" style="left:568px;top:206.2px;width:19px;height:18.4px;border-radius:3px;background:#3a3a3a"></div>
 <svg class="a" style="left:572.5px;top:210.5px" width="10" height="10" viewBox="0 0 10 10"><path d="M4.2 3.2 L5.6 1.8 C6.4 1 7.6 1 8.3 1.7 C9 2.4 9 3.6 8.2 4.4 L6.8 5.8 M5.8 6.8 L4.4 8.2 C3.6 9 2.4 9 1.7 8.3 C1 7.6 1 6.4 1.8 5.6 L3.2 4.2 M3.6 6.4 L6.4 3.6" fill="none" stroke="#d8d8d8" stroke-width="0.9"/></svg>
 <div class="a lbl" style="left:452.5px;top:212px">Left</div>
 <div class="a lbl" style="left:509.6px;top:212px">Right</div>
 <div class="a step" style="left:452.4px;top:223.5px;width:50px;height:17px"><svg class="a" style="left:0;top:0" width="12" height="16" viewBox="0 0 12 16" preserveAspectRatio="none"><rect width="12" height="7.7" fill="#2c2c2c"/><rect y="7.7" width="12" height="8.3" fill="#383838"/><path d="M3.6 5.6 L6 3.3 L8.4 5.6" fill="none" stroke="#d8d8d8" stroke-width="0.85"/><path d="M3.6 10.3 L6 12.6 L8.4 10.3" fill="none" stroke="#5a5a5a" stroke-width="0.85"/></svg><span style="left:16px">0 px</span></div>
 <div class="a step" style="left:509.6px;top:223.5px;width:50px;height:17px"><svg class="a" style="left:0;top:0" width="12" height="16" viewBox="0 0 12 16" preserveAspectRatio="none"><rect width="12" height="7.7" fill="#2c2c2c"/><rect y="7.7" width="12" height="8.3" fill="#383838"/><path d="M3.6 5.6 L6 3.3 L8.4 5.6" fill="none" stroke="#d8d8d8" stroke-width="0.85"/><path d="M3.6 10.3 L6 12.6 L8.4 10.3" fill="none" stroke="#5a5a5a" stroke-width="0.85"/></svg><span style="left:16px">0 px</span></div>
 <svg class="a" style="left:453.4px;top:250px" width="6" height="4" viewBox="0 0 6 4"><path d="M0.6 0.6 L3 3 L5.4 0.6" fill="none" stroke="#e0e0e0" stroke-width="1"/></svg>
 <div class="a lbl" style="left:461px;top:247.8px;color:#d0d0d0">Advanced Options</div>
 <div class="a lbl" style="left:452.5px;top:260px">Color Mode</div>
 <div class="a dd" style="left:452.4px;top:271.1px;width:136.2px;height:17.3px"><span>RGB Color</span><svg class="chev" width="6" height="4" viewBox="0 0 6 4"><path d="M0.6 0.6 L3 3 L5.4 0.6" fill="none" stroke="#d8d8d8" stroke-width="1"/></svg></div>
 <div class="a lbl" style="left:452.5px;top:295.4px">Raster Effects</div>
 <div class="a dd" style="left:452.4px;top:305.5px;width:136.2px;height:17.9px"><span>Screen (72 ppi)</span><svg class="chev" width="6" height="4" viewBox="0 0 6 4"><path d="M0.6 0.6 L3 3 L5.4 0.6" fill="none" stroke="#d8d8d8" stroke-width="1"/></svg></div>
 <div class="a lbl" style="left:452.5px;top:329.8px">Preview Mode</div>
 <div class="a dd" style="left:452.4px;top:340.3px;width:136.2px;height:18px"><span>Default</span><svg class="chev" width="6" height="4" viewBox="0 0 6 4"><path d="M0.6 0.6 L3 3 L5.4 0.6" fill="none" stroke="#d8d8d8" stroke-width="1"/></svg></div>
 <div class="a" style="left:611.5px;top:68px;width:6.5px;height:299px;background:#444"></div>
 <div class="a" style="left:611.5px;top:75px;width:6.5px;height:267px;background:#5a5a5a;border-radius:3px"></div>
 <svg class="a" style="left:612.5px;top:70px" width="5" height="4" viewBox="0 0 5 4"><path d="M0.5 3 L2.5 1 L4.5 3" fill="none" stroke="#9a9a9a" stroke-width="0.8"/></svg>
 <svg class="a" style="left:612.5px;top:361px" width="5" height="4" viewBox="0 0 5 4"><path d="M0.5 1 L2.5 3 L4.5 1" fill="none" stroke="#9a9a9a" stroke-width="0.8"/></svg>
 <div class="a" style="left:515px;top:378px;width:41.8px;height:18.7px;border-radius:9.25px;background:#1473e6;color:#fff;font-size:7.3px;font-weight:bold;text-align:center;line-height:18.5px">Create</div>
 <div class="a" style="left:566px;top:378.5px;width:41.2px;height:18.5px;border-radius:9.25px;border:1.4px solid #e0e0e0;color:#f0f0f0;font-size:7.3px;font-weight:bold;text-align:center;line-height:15.7px">Close</div>

</div>


</body></html>
